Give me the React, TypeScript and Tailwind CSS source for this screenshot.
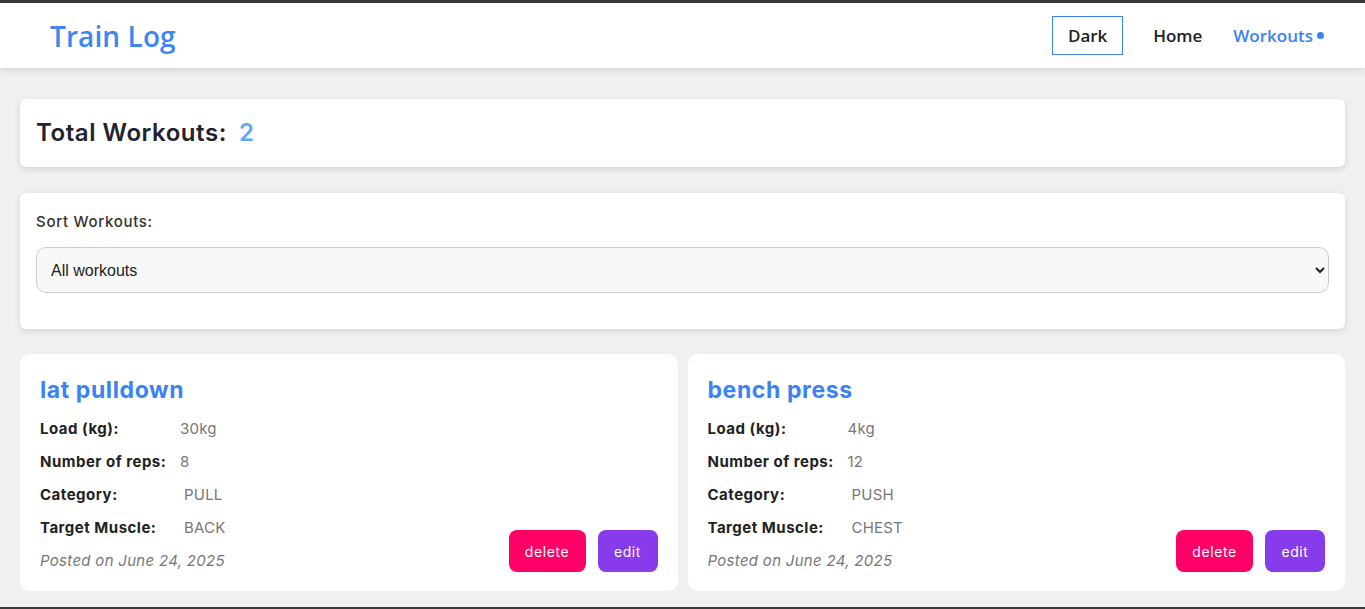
import React from "react";

const body = { fontFamily: "Inter, 'Noto Sans', sans-serif" };

type W = { title: string; load: string; reps: string; cat: string; muscle: string; date: string };

const workouts: W[] = [
  { title: "lat pulldown", load: "30kg", reps: "8", cat: "PULL", muscle: "BACK", date: "June 24, 2025" },
  { title: "bench press", load: "4kg", reps: "12", cat: "PUSH", muscle: "CHEST", date: "June 24, 2025" },
];

function Row({ label, value, pad }: { label: string; value: string; pad?: boolean }) {
  return (
    <div className="flex items-center h-[33px]">
      <span className="w-[140px] shrink-0 text-[15px] font-bold text-[#222] tracking-[0.5px]">{label}</span>
      <span className={"text-[15px] text-[#777] tracking-[0.2px] " + (pad ? "pl-[4px]" : "")}>{value}</span>
    </div>
  );
}

function Card({ w }: { w: W }) {
  return (
    <div className="flex-1 bg-white rounded-[10px] px-[20px] pt-[20px] pb-[13px] flex flex-col">
      <h2 className="text-[23px] font-bold text-[#3b82f6] leading-[32px] tracking-[0.6px] mb-[7px]">{w.title}</h2>
      <Row label="Load (kg):" value={w.load} />
      <Row label="Number of reps:" value={w.reps} />
      <Row label="Category:" value={w.cat} pad />
      <div className="flex items-end justify-between">
        <div>
          <Row label="Target Muscle:" value={w.muscle} pad />
          <div className="h-[33px] flex items-center text-[15px] italic text-[#777] tracking-[0.3px]">Posted on {w.date}</div>
        </div>
        <div className="flex gap-[12px] mb-[6px]">
          <button className="bg-[#ff0066] text-white text-[14px] tracking-[0.6px] rounded-[8px] w-[77px] h-[42px]">delete</button>
          <button className="bg-[#883bea] text-white text-[14px] tracking-[0.6px] rounded-[8px] w-[60px] h-[42px]">edit</button>
        </div>
      </div>
    </div>
  );
}

export default function App() {
  return (
    <div className="min-h-[609px] bg-[#f0f0f0] border-t-[3px] border-[#3a3a3a]" style={body}>
      <header className="bg-white h-[65px] flex items-center justify-between pl-[50px] pr-[41px] shadow-[0_2px_8px_rgba(0,0,0,0.12)]">
        <div className="text-[28px] font-semibold text-[#3f86f5] tracking-[0.1px]" style={{ fontFamily: "'Open Sans', sans-serif" }}>
          Train Log
        </div>
        <nav className="flex items-center text-[17px] font-semibold" style={{ fontFamily: "'Open Sans', sans-serif" }}>
          <button className="border border-[#3b82f6] w-[71px] h-[39px] text-[#222]">Dark</button>
          <span className="ml-[30px] text-[#222]">Home</span>
          <span className="ml-[31px] text-[#3b82f6] flex items-center">
            Workouts
            <span className="ml-[4px] w-[7px] h-[7px] rounded-full bg-[#3b82f6] inline-block" />
          </span>
        </nav>
      </header>
      <main className="px-[20px] pt-[31px] pb-[16px] flex flex-col">
        <div className="bg-white rounded-[6px] h-[68px] flex items-center px-[16px] shadow-[0_2px_6px_rgba(0,0,0,0.12)]">
          <span className="text-[24px] font-semibold text-[#1f2230] tracking-[0.55px]">Total Workouts:</span>
          <span className="ml-[12px] text-[24px] font-semibold text-[#60a5fa]">2</span>
        </div>
        <div className="mt-[26px] bg-white rounded-[6px] h-[136px] px-[16px] pt-[19px] shadow-[0_2px_6px_rgba(0,0,0,0.12)]">
          <div className="text-[15px] font-medium text-[#333] leading-[20px] tracking-[0.7px]">Sort Workouts:</div>
          <select
            className="mt-[15px] w-full h-[46px] bg-[#f8f8f8] border border-[#cccccc] rounded-[10px] pl-[10px] pr-[8px] text-[16px] text-[#222]"
            style={{ fontFamily: "'Liberation Sans', Arial, sans-serif" }}
            defaultValue="all"
          >
            <option value="all">All workouts</option>
          </select>
        </div>
        <div className="mt-[25px] flex gap-[10px]">
          {workouts.map((w) => (
            <Card key={w.title} w={w} />
          ))}
        </div>
      </main>
      <div className="h-[3px] bg-[#3a3a3a]" />
    </div>
  );
}
